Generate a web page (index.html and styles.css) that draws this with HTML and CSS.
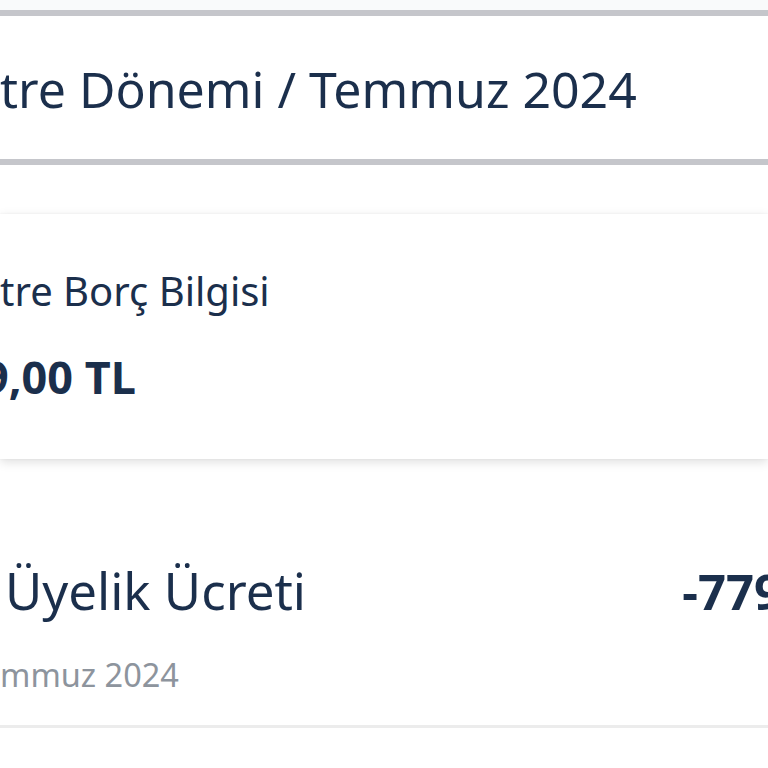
FILE: index.html
```html
<!DOCTYPE html>
<html lang="tr">
<head>
<meta charset="utf-8">
<link rel="stylesheet" href="styles.css">
</head>
<body>
<div class="page">
  <div class="top-strip"></div>
  <div class="period">
    <div class="period-title">tre Dönemi / Temmuz 2024</div>
  </div>
  <div class="debt-card">
    <div class="debt-label">tre Borç Bilgisi</div>
    <div class="debt-amount">9,00 TL</div>
  </div>
  <div class="tx-row">
    <div class="tx-main">
      <div class="tx-title">Üyelik Ücreti</div>
      <div class="tx-amount">-779</div>
    </div>
    <div class="tx-date">mmuz 2024</div>
  </div>
</div>
</body>
</html>
```

FILE: styles.css
```css
html, body {
  margin: 0;
  padding: 0;
  background: #ffffff;
  overflow: hidden;
}
.page {
  width: 768px;
  height: 768px;
  overflow: hidden;
  font-family: "Noto Sans", "Open Sans", sans-serif;
  color: #1b2f4c;
}
.top-strip {
  height: 10px;
  background: #f9fafb;
}
.period {
  border-top: 6px solid #c5c6cb;
  border-bottom: 6px solid #c5c6cb;
  height: 143px;
  background: #ffffff;
  display: flex;
  align-items: center;
}
.period-title {
  font-size: 50px;
  line-height: 1;
  margin-top: 2px;
  white-space: nowrap;
}
.debt-card {
  margin-top: 49px;
  height: 245px;
  background: #ffffff;
  box-shadow: 0 3px 10px rgba(0, 0, 0, 0.13), 0 0 2px rgba(0, 0, 0, 0.06);
  display: flex;
  flex-direction: column;
  box-sizing: border-box;
  padding-top: 57px;
}
.debt-label {
  font-size: 40px;
  line-height: 1;
  white-space: nowrap;
}
.debt-amount {
  font-size: 45px;
  font-weight: 700;
  line-height: 1;
  margin-top: 43px;
  margin-left: -17px;
  white-space: nowrap;
}
.tx-row {
  height: 269px;
  border-bottom: 3px solid #ececec;
  box-sizing: border-box;
  display: flex;
  flex-direction: column;
  padding-top: 106px;
}
.tx-main {
  display: flex;
  justify-content: space-between;
  align-items: baseline;
  padding-left: 5px;
}
.tx-title {
  font-size: 51px;
  line-height: 1;
  white-space: nowrap;
}
.tx-amount {
  font-size: 49px;
  font-weight: 700;
  line-height: 1;
  white-space: nowrap;
  margin-right: -14px;
}
.tx-date {
  font-size: 32.5px;
  line-height: 1;
  color: #8d949d;
  margin-top: 43px;
  white-space: nowrap;
}
```
